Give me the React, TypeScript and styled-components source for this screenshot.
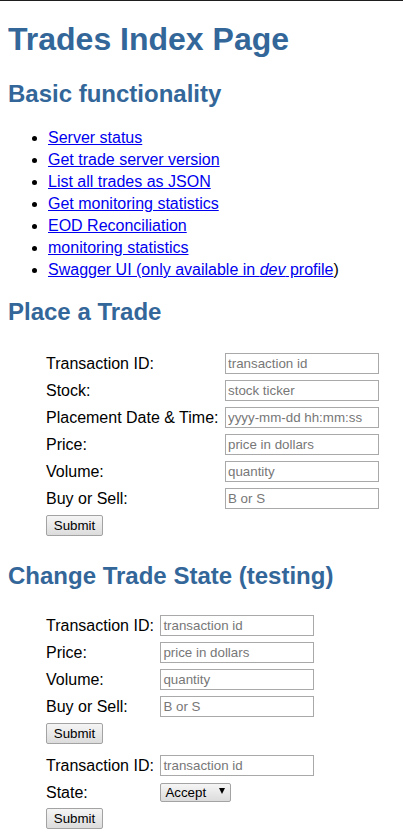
import React from "react";
import styled, { createGlobalStyle } from "styled-components";

const GlobalStyle = createGlobalStyle`
  body {
    margin: 0 8px 8px;
    font-family: "Liberation Sans", Arial, sans-serif;
    font-size: 16px;
    color: #000;
    background: #fff;
  }
`;

const TopRule = styled.div`
  position: fixed;
  top: 0;
  left: 0;
  right: 0;
  height: 1px;
  background: #1e1e1e;
`;

const Title = styled.h1`
  color: #336699;
  font-size: 32px;
  font-weight: bold;
  margin: 21.44px 0;
`;

const SectionTitle = styled.h2`
  color: #336699;
  font-size: 24px;
  font-weight: bold;
  margin: 16px 0;
`;

const LinkList = styled.ul`
  margin: 19px 0 17px;
  padding-left: 40px;
  list-style: disc;
`;

const LinkItem = styled.li`
  line-height: 22px;
`;

const Link = styled.a`
  color: #0000ee;
  text-decoration: underline;
`;

const TradeForm = styled.form<{ $mt?: number; $mb?: number }>`
  display: grid;
  grid-template-columns: auto auto;
  justify-content: start;
  align-items: start;
  column-gap: 6.5px;
  row-gap: 6px;
  margin: ${(p) => p.$mt ?? 0}px 0 ${(p) => p.$mb ?? 0}px 38px;
`;

const FieldLabel = styled.label`
  font-size: 16px;
  line-height: 18px;
  padding-top: 2px;
  white-space: nowrap;
`;

const TextInput = styled.input`
  box-sizing: border-box;
  width: 154px;
  height: 21px;
  margin: 0;
  padding: 1px 2px;
  border: 1px solid #a9a9a9;
  border-radius: 0;
  font-family: "Liberation Sans", Arial, sans-serif;
  font-size: 13.33px;
  color: #000;
  background: #fff;
  &::placeholder {
    color: #777;
  }
`;

const SubmitButton = styled.button`
  grid-column: 1;
  justify-self: start;
  box-sizing: border-box;
  height: 21px;
  width: 57px;
  margin: 0;
  padding: 0 6px;
  border: 1px solid #a3a3a3;
  border-radius: 2px;
  background: linear-gradient(#f5f5f5, #dcdcdc);
  font-family: "Liberation Sans", Arial, sans-serif;
  font-size: 13.33px;
  color: #000;
`;

const SelectWrap = styled.span`
  position: relative;
  display: inline-block;
  width: 71px;
  height: 19px;
  margin-top: 1px;
`;

const StateSelect = styled.select`
  appearance: none;
  -webkit-appearance: none;
  box-sizing: border-box;
  width: 71px;
  height: 19px;
  margin: 0;
  padding: 0 0 0 4px;
  border: 1px solid #a3a3a3;
  border-radius: 2px;
  background: linear-gradient(#f5f5f5, #dcdcdc);
  font-family: "Liberation Sans", Arial, sans-serif;
  font-size: 13.33px;
  color: #000;
`;

const SelectArrow = styled.span`
  position: absolute;
  right: 6px;
  top: 5px;
  width: 0;
  height: 0;
  border-left: 3.5px solid transparent;
  border-right: 3.5px solid transparent;
  border-top: 6px solid #000;
  pointer-events: none;
`;

const links: React.ReactNode[] = [
  "Server status",
  "Get trade server version",
  "List all trades as JSON",
  "Get monitoring statistics",
  "EOD Reconciliation",
  "monitoring statistics",
  <>
    Swagger UI (only available in <i>dev</i> profile
  </>,
];

type Field = { label: string; placeholder: string };

const placeFields: Field[] = [
  { label: "Transaction ID:", placeholder: "transaction id" },
  { label: "Stock:", placeholder: "stock ticker" },
  { label: "Placement Date & Time:", placeholder: "yyyy-mm-dd hh:mm:ss" },
  { label: "Price:", placeholder: "price in dollars" },
  { label: "Volume:", placeholder: "quantity" },
  { label: "Buy or Sell:", placeholder: "B or S" },
];

const changeFields: Field[] = [
  { label: "Transaction ID:", placeholder: "transaction id" },
  { label: "Price:", placeholder: "price in dollars" },
  { label: "Volume:", placeholder: "quantity" },
  { label: "Buy or Sell:", placeholder: "B or S" },
];

const Fields = ({ fields }: { fields: Field[] }) => (
  <>
    {fields.map((f) => (
      <React.Fragment key={f.label}>
        <FieldLabel>{f.label}</FieldLabel>
        <TextInput type="text" placeholder={f.placeholder} />
      </React.Fragment>
    ))}
  </>
);

export default function App() {
  const stop = (e: React.FormEvent) => e.preventDefault();
  return (
    <>
      <GlobalStyle />
      <TopRule />
      <Title>Trades Index Page</Title>
      <SectionTitle>Basic functionality</SectionTitle>
      <LinkList>
        {links.map((l, i) => (
          <LinkItem key={i}>
            <Link href="#">{l}</Link>
            {i === links.length - 1 ? ")" : null}
          </LinkItem>
        ))}
      </LinkList>
      <SectionTitle>Place a Trade</SectionTitle>
      <TradeForm $mt={27} $mb={26} onSubmit={stop}>
        <Fields fields={placeFields} />
        <SubmitButton type="submit">Submit</SubmitButton>
      </TradeForm>
      <SectionTitle>Change Trade State (testing)</SectionTitle>
      <TradeForm $mt={25.5} $mb={11} onSubmit={stop}>
        <Fields fields={changeFields} />
        <SubmitButton type="submit">Submit</SubmitButton>
      </TradeForm>
      <TradeForm onSubmit={stop}>
        <FieldLabel>Transaction ID:</FieldLabel>
        <TextInput type="text" placeholder="transaction id" />
        <FieldLabel>State:</FieldLabel>
        <SelectWrap>
          <StateSelect defaultValue="Accept">
            <option>Accept</option>
            <option>Reject</option>
          </StateSelect>
          <SelectArrow />
        </SelectWrap>
        <SubmitButton type="submit">Submit</SubmitButton>
      </TradeForm>
    </>
  );
}
